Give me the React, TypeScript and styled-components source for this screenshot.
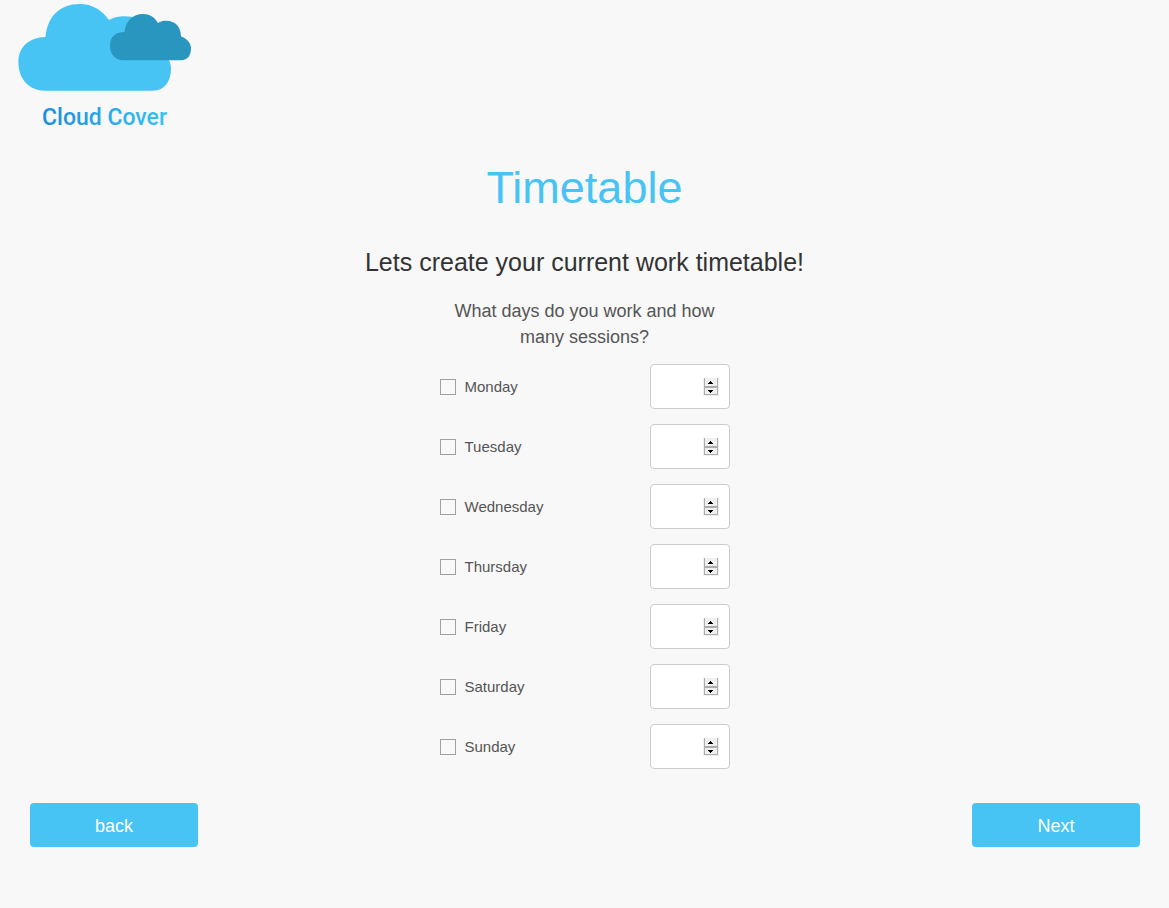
import React, { useState } from "react";
import styled, { createGlobalStyle } from "styled-components";

const GlobalStyle = createGlobalStyle`
  *, *::before, *::after { box-sizing: border-box; }
  body {
    margin: 0;
    background: #f8f8f8;
    color: #555;
    font-family: "Liberation Sans", Arial, sans-serif;
    font-size: 15px;
  }
`;

const Page = styled.div`
  display: flex;
  flex-direction: column;
  padding-bottom: 60px;
`;

const Header = styled.header`
  padding-left: 18px;
  height: 138px;
`;

const Logo = styled.svg`
  display: block;
  font-family: Roboto, sans-serif;
  font-size: 23px;
  font-weight: 500;
`;

const Main = styled.main`
  display: flex;
  flex-direction: column;
  align-items: center;
  padding: 25px 30px 0;
  text-align: center;
`;

const Title = styled.h1`
  margin: 0;
  color: #47c4f3;
  font-size: 45px;
  font-weight: 400;
  line-height: 50px;
`;

const Subtitle = styled.h2`
  margin: 35px 0 0;
  color: #333;
  font-size: 25px;
  font-weight: 400;
  line-height: 28px;
`;

const Timetable = styled.fieldset`
  width: 100%;
  max-width: 290px;
  min-width: 0;
  margin: 22px 0 0;
  padding: 0;
  border: 0;
`;

const Question = styled.legend`
  padding: 0 10px;
  margin-bottom: 14px;
  font-size: 18px;
  line-height: 26px;
`;

const Days = styled.div`
  display: flex;
  flex-direction: column;
  gap: 15px;
`;

const DayRow = styled.div`
  display: flex;
  align-items: center;
  justify-content: space-between;
  height: 45px;
`;

const DayLabel = styled.label`
  display: flex;
  align-items: center;
  gap: 9px;
  line-height: 20px;
`;

const Checkbox = styled.input`
  appearance: none;
  width: 16px;
  height: 16px;
  margin: 0;
  border: 1px solid #a0a0a0;
  background: #f8f8f8;

  &:checked {
    background: #47c4f3;
    box-shadow: inset 0 0 0 3px #f8f8f8;
  }
`;

const NumberField = styled.div`
  position: relative;
  width: 80px;
  height: 45px;
`;

const SessionsInput = styled.input`
  appearance: textfield;
  width: 100%;
  height: 100%;
  padding: 10px 30px 10px 12px;
  border: 1px solid #ccc;
  border-radius: 4px;
  background: #fff;
  color: #555;
  font: inherit;

  &::-webkit-inner-spin-button { appearance: none; margin: 0; }
`;

const Spinner = styled.div`
  position: absolute;
  top: 14px;
  right: 11px;
  display: flex;
  flex-direction: column;
  width: 16px;
  padding: 0 1px 1px;
  background: #f0f0f0;
`;

const SpinButton = styled.button<{ $up?: boolean }>`
  display: flex;
  align-items: center;
  justify-content: center;
  height: ${({ $up }) => ($up ? 10 : 7)}px;
  padding: ${({ $up }) => ($up ? 1 : 0)}px 0 0;
  border: solid #acacac;
  border-width: 0 1px ${({ $up }) => ($up ? 2 : 1)}px;
  background: #f0f0f0;
  color: #000;
`;

const Actions = styled.div`
  display: flex;
  justify-content: space-between;
  padding: 34px 29px 0 30px;
`;

const ActionButton = styled.button`
  width: 168px;
  height: 44px;
  padding: 2px 0 0;
  border: 0;
  border-radius: 4px;
  background: #47c4f3;
  color: #fff;
  font: 18px/26px "Liberation Sans", Arial, sans-serif;
  cursor: pointer;
`;

function CloudLogo() {
  return (
    <Logo width="174" height="132" viewBox="18 0 174 132" role="img" aria-label="Cloud Cover">
      <defs>
        <linearGradient id="wordmark" x1="0" x2="1" y1="0" y2="0">
          <stop offset="0" stopColor="#1c8ddb" />
          <stop offset="1" stopColor="#36c2f4" />
        </linearGradient>
      </defs>
      <path
        fill="#47c4f3"
        d="M45 90.7C29 90.7 18.4 79 18.4 62C18.4 47 29 37.5 45.5 37C47.5 16 60 4 80 4C92 4 102 10 109 20C115 17 119 16.3 124 16.3C145 16.3 158 27 158 48C166 53 171 60 171 69C171 82 164 90.7 153 90.7Z"
      />
      <path
        fill="#2996bf"
        d="M123 60.2C115 60.2 110 54 110 46C110 37 115 32 124.5 32C125.5 21 133 14 143 14C149.5 14 154.500 17 158 23C160.5 21.3 163 20.7 166 20.7C175.5 20.7 181 27 181 36.5C187 38.500 191 43 191 48.5C191 55.5 187.5 60.2 181.5 60.2Z"
      />
      <text x="42" y="125" fill="url(#wordmark)">Cloud Cover</text>
    </Logo>
  );
}

function DaySessions({ day }: { day: string }) {
  const [working, setWorking] = useState(false);
  const [sessions, setSessions] = useState("");
  const step = (amount: number) =>
    setSessions((value) => String(Math.max(0, Number(value) + amount)));

  return (
    <DayRow>
      <DayLabel>
        <Checkbox
          type="checkbox"
          checked={working}
          onChange={(event) => setWorking(event.target.checked)}
        />
        {day}
      </DayLabel>
      <NumberField>
        <SessionsInput
          type="number"
          min={0}
          aria-label={`${day} sessions`}
          value={sessions}
          onChange={(event) => setSessions(event.target.value)}
        />
        <Spinner>
          <SpinButton type="button" $up aria-label={`More ${day} sessions`} onClick={() => step(1)}>
            <svg width="6" height="3" viewBox="0 0 6 3" fill="currentColor" shapeRendering="crispEdges">
              <path d="M2 0H3V1H4V2H5V3H0V2H1V1H2Z" />
            </svg>
          </SpinButton>
          <SpinButton type="button" aria-label={`Fewer ${day} sessions`} onClick={() => step(-1)}>
            <svg width="6" height="3" viewBox="0 0 6 3" fill="currentColor" shapeRendering="crispEdges">
              <path d="M0 0H5V1H4V2H3V3H2V2H1V1H0Z" />
            </svg>
          </SpinButton>
        </Spinner>
      </NumberField>
    </DayRow>
  );
}

const days = ["Monday", "Tuesday", "Wednesday", "Thursday", "Friday", "Saturday", "Sunday"];

export default function App() {
  return (
    <Page>
      <GlobalStyle />
      <Header>
        <CloudLogo />
      </Header>
      <Main>
        <Title>Timetable</Title>
        <Subtitle>Lets create your current work timetable!</Subtitle>
        <Timetable>
          <Question>What days do you work and how many sessions?</Question>
          <Days>
            {days.map((day) => (
              <DaySessions key={day} day={day} />
            ))}
          </Days>
        </Timetable>
      </Main>
      <Actions>
        <ActionButton type="button">back</ActionButton>
        <ActionButton type="button">Next</ActionButton>
      </Actions>
    </Page>
  );
}
